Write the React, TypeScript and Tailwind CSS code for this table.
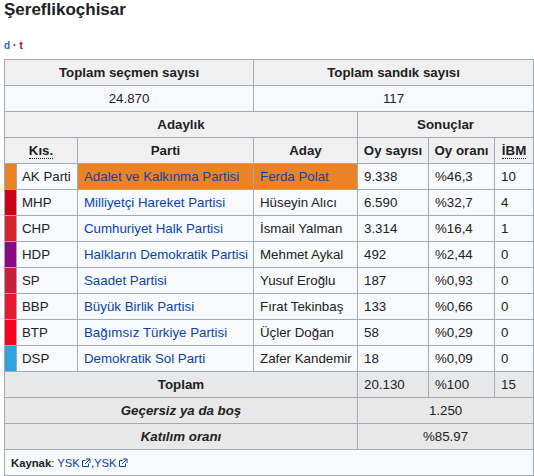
import React from "react";

interface Row {
  color: string;
  short: string;
  party: string;
  candidate: string;
  votes: string;
  share: string;
  seats: string;
  winner?: boolean;
}

const rows: Row[] = [
  { color: "#ea8325", short: "AK Parti", party: "Adalet ve Kalkınma Partisi", candidate: "Ferda Polat", votes: "9.338", share: "%46,3", seats: "10", winner: true },
  { color: "#cc0019", short: "MHP", party: "Milliyetçi Hareket Partisi", candidate: "Hüseyin Alıcı", votes: "6.590", share: "%32,7", seats: "4" },
  { color: "#d5262b", short: "CHP", party: "Cumhuriyet Halk Partisi", candidate: "İsmail Yalman", votes: "3.314", share: "%16,4", seats: "1" },
  { color: "#8a0a86", short: "HDP", party: "Halkların Demokratik Partisi", candidate: "Mehmet Aykal", votes: "492", share: "%2,44", seats: "0" },
  { color: "#c8203a", short: "SP", party: "Saadet Partisi", candidate: "Yusuf Eroğlu", votes: "187", share: "%0,93", seats: "0" },
  { color: "#e51b2d", short: "BBP", party: "Büyük Birlik Partisi", candidate: "Fırat Tekinbaş", votes: "133", share: "%0,66", seats: "0" },
  { color: "#fa0020", short: "BTP", party: "Bağımsız Türkiye Partisi", candidate: "Üçler Doğan", votes: "58", share: "%0,29", seats: "0" },
  { color: "#2ea3dc", short: "DSP", party: "Demokratik Sol Parti", candidate: "Zafer Kandemir", votes: "18", share: "%0,09", seats: "0" },
];

const ExtIcon = () => (
  <svg width="10" height="10" viewBox="0 0 10 10" className="inline-block ml-[1px] align-[-1px]" fill="none" stroke="#0645ad" strokeWidth="1">
    <path d="M4.5 2.5H1.5V8.5H7.5V5.5" />
    <path d="M5 1H9V5" />
    <path d="M9 1L4 6" />
  </svg>
);

const th = "border border-[#a2a9b1] bg-[#f0f0f1] font-bold text-center px-[5px] h-[26px]";
const td = "border border-[#a2a9b1] px-[6px] h-[26px]";
const foot = "border border-[#a2a9b1] bg-[#e8e8e9] px-[6px] h-[26px]";

export default function App() {
  return (
    <div className="font-['Liberation_Sans',Arial,sans-serif] text-[#202122] bg-white w-[534px] h-[476px] pl-[4px] overflow-hidden">
      <div className="text-[17px] font-bold leading-[20px]">Şereflikoçhisar</div>
      <div className="mt-[20px] text-[10px] font-bold leading-[12px]">
        <span className="text-[#3366cc]">d</span>
        <span className="mx-[3px]">·</span>
        <span className="text-[#ba0000]">t</span>
      </div>
      <table className="mt-[7px] w-[529px] table-fixed border-collapse border border-[#a2a9b1] bg-[#f8f9fa] text-[13.3px] leading-[16px]">
        <colgroup>
          <col className="w-[12px]" />
          <col className="w-[61px]" />
          <col className="w-[176px]" />
          <col className="w-[104px]" />
          <col className="w-[71px]" />
          <col className="w-[66px]" />
          <col className="w-[39px]" />
        </colgroup>
        <tbody>
          <tr>
            <th colSpan={3} className={th}>Toplam seçmen sayısı</th>
            <th colSpan={4} className={th}>Toplam sandık sayısı</th>
          </tr>
          <tr>
            <td colSpan={3} className={td + " text-center"}>24.870</td>
            <td colSpan={4} className={td + " text-center"}>117</td>
          </tr>
          <tr>
            <th colSpan={4} className={th}>Adaylık</th>
            <th colSpan={3} className={th}>Sonuçlar</th>
          </tr>
          <tr>
            <th colSpan={2} className={th}>
              <span className="border-b border-dotted border-[#202122]">Kıs.</span>
            </th>
            <th className={th}>Parti</th>
            <th className={th}>Aday</th>
            <th className={th + " whitespace-nowrap !px-[3px]"}>Oy sayısı</th>
            <th className={th + " whitespace-nowrap !px-[3px]"}>Oy oranı</th>
            <th className={th}>
              <span className="border-b border-dotted border-[#202122]">İBM</span>
            </th>
          </tr>
          {rows.map((r) => (
            <tr key={r.short}>
              <td className="border border-[#a2a9b1] h-[26px]" style={{ backgroundColor: r.color }} />
              <td className={td + " whitespace-nowrap !pl-[5px] !pr-0"}>{r.short}</td>
              <td className={td + " whitespace-nowrap text-[#0645ad]" + (r.winner ? " bg-[#ea8325]" : "")}>{r.party}</td>
              <td className={td + " whitespace-nowrap" + (r.winner ? " bg-[#ea8325] text-[#0645ad]" : "")}>{r.candidate}</td>
              <td className={td}>{r.votes}</td>
              <td className={td}>{r.share}</td>
              <td className={td}>{r.seats}</td>
            </tr>
          ))}
          <tr>
            <th colSpan={4} className={foot + " font-bold text-center"}>Toplam</th>
            <td className={foot}>20.130</td>
            <td className={foot}>%100</td>
            <td className={foot}>15</td>
          </tr>
          <tr>
            <th colSpan={4} className={foot + " font-bold italic text-center"}>Geçersiz ya da boş</th>
            <td colSpan={3} className={foot + " text-center"}>1.250</td>
          </tr>
          <tr>
            <th colSpan={4} className={foot + " font-bold italic text-center"}>Katılım oranı</th>
            <td colSpan={3} className={foot + " text-center"}>%85.97</td>
          </tr>
          <tr>
            <td colSpan={7} className={td + " text-[11.3px]"}>
              <span className="font-bold">Kaynak</span>: <span className="text-[#0645ad]">YSK</span>
              <ExtIcon />,<span className="text-[#0645ad]">YSK</span>
              <ExtIcon />
            </td>
          </tr>
        </tbody>
      </table>
    </div>
  );
}
